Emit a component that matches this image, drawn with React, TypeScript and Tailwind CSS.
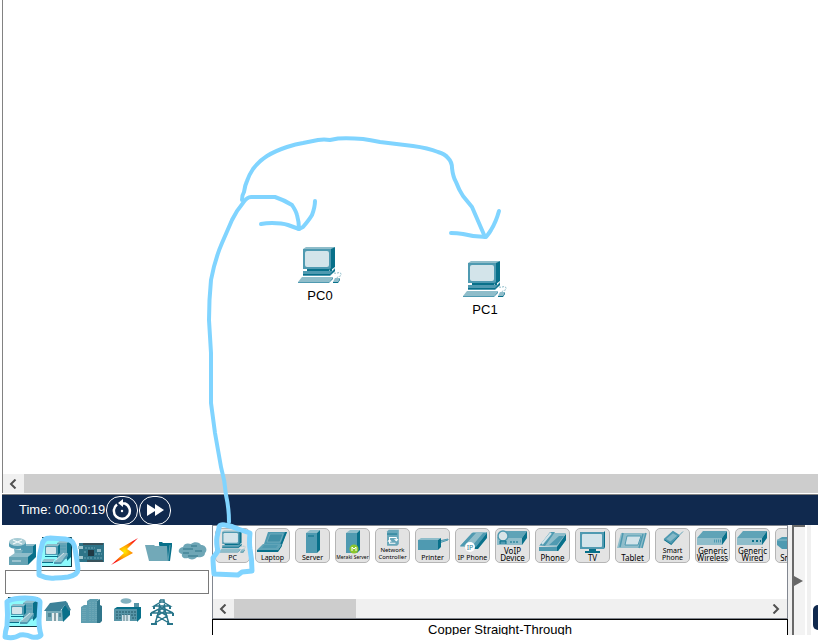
import type { ReactNode } from "react";

const MID = "#4f9ab1";
const DARK = "#08708a";
const LIGHT = "#8fbdca";
const SCREEN = "#d3e4ea";

function PcArt({ className }: { className: string }) {
  return (
    <svg viewBox="0 0 44 38" className={className} aria-hidden="true">
      <path d="M5 3l3-2h29l-3 2z" fill={LIGHT} />
      <path d="M33 3l4-2v20l-4 3z" fill={DARK} />
      <rect x="5" y="3" width="28" height="20" fill={MID} />
      <rect x="7" y="5" width="24" height="16" rx="2" fill={SCREEN} />
      <path d="M9 23h22v2H9z" fill={DARK} />
      <path d="M31 23l3-1v3l-2 1z" fill={DARK} />
      <path d="M5 25h29l3-3v3l-5 5H5z" fill={MID} />
      <path d="M5 28h27l5-5v2l-5 4H5z" fill={DARK} />
      <path d="M4 31h31l-4 5H0z" fill={LIGHT} />
      <path d="M0 36h31l4-5v2l-4 4H0z" fill={MID} />
      <path d="M35 36l2-4h5l-2 4z" fill={LIGHT} />
      <path d="M35 36h5l2-4v2l-2 3h-5z" fill={DARK} />
      <path d="M36 27c3 1 6-2 7 1s-4 2-4 4" fill="none" stroke={LIGHT} strokeDasharray="2 1" />
    </svg>
  );
}

function Icon({ children, box = "0 0 30 30", className = "h-[30px] w-[30px]" }: { children: ReactNode; box?: string; className?: string }) {
  return (
    <svg viewBox={box} className={className} aria-hidden="true">
      {children}
    </svg>
  );
}

function EndDevices() {
  return (
    <Icon>
      <path d="M0 0h30v30H0z" fill="#8cfafc" />
      <path d="M0 .5h29.500V30M0 29.500h30" fill="none" stroke="#123c46" />
      <path d="M15 6l4-3h10l-4 3z" fill={LIGHT} />
      <path d="M15 6h10v16H15z" fill="#65a5b8" />
      <path d="M25 6l4-3v17l-4 4z" fill={DARK} />
      <path d="M18 9h6M18 12h6" stroke={MID} />
      <path d="M3 9l2-2h13l-2 2z" fill={LIGHT} />
      <path d="M3 9h13v9H3z" fill={MID} />
      <path d="M16 9l2-2v9l-2 2z" fill={DARK} />
      <rect x="4" y="10" width="10" height="7" rx="1" fill={SCREEN} />
      <path d="M3 19h13v1H3z" fill={DARK} />
      <path d="M2 22h11l-2 3H0z" fill={LIGHT} />
      <path d="M0 25h11v1H0z" fill={DARK} />
      <path d="M12 25l9-9h5l-7 9z" fill={LIGHT} />
      <path d="M12 25h7l7-9v3l-7 8h-7z" fill={MID} />
      <path d="M14 23l8-7" stroke={SCREEN} />
    </Icon>
  );
}

const categories: { name: string; art: ReactNode }[] = [
  {
    name: "Network Devices",
    art: (
      <Icon>
        <path d="M13 9l4-2h11l-3 2z" fill={LIGHT} />
        <path d="M13 9h12v13H13z" fill={MID} />
        <path d="M25 9l3-2v13l-3 3z" fill={DARK} />
        <path d="M1 5v4c1 4 16 4 17 0V5z" fill={MID} />
        <ellipse cx="9.500" cy="5" rx="8.500" ry="4" fill="#a7ccd5" />
        <path d="M5 3l9 4M14 3L5 7" stroke="#f4fafb" strokeWidth="1.200" />
        <path d="M6 12l9 1-3 6H7z" fill="#78b0bf" />
        <path d="M1 20l6-4h18l-5 4z" fill={LIGHT} />
        <path d="M1 20h19v8H1z" fill="#65a3b4" />
        <path d="M20 20l5-4v7l-5 5z" fill={DARK} />
        <path d="M4 24h9" stroke={SCREEN} />
      </Icon>
    ),
  },
  { name: "End Devices", art: <EndDevices /> },
  {
    name: "Components",
    art: (
      <Icon>
        <path d="M3 6h25v19H3z" fill="#2e7488" />
        <path d="M7 6h20v2H7zM11 23h16v2H11z" fill="#38515a" />
        <path d="M12 13h6v6h-6z" fill="#203943" />
        <path d="M2 9h5v3H2zM2 19h5v3H2z" fill="#a5c8cf" />
        <path d="M9 11h10M19 17h7M18 21h8M8 21h8M8 15h3" stroke="#6fa6b5" strokeDasharray="2 1" />
        <path d="M21 12h4v3h-4z" fill="#89b5c1" />
      </Icon>
    ),
  },
  {
    name: "Connections",
    art: (
      <Icon>
        <defs>
          <radialGradient id="bolt"><stop stopColor="#ffed00" /><stop offset=".5" stopColor="#ff9800" /><stop offset="1" stopColor="#fb1212" /></radialGradient>
        </defs>
        <path d="M28 1L9 12l5 4L1 28l22-12-6-4z" fill="url(#bolt)" />
      </Icon>
    ),
  },
  {
    name: "Miscellaneous",
    art: (
      <Icon>
        <path d="M15 8V5h3l1 1h9v3l-2 15h-4z" fill={DARK} />
        <path d="M1 8h9l1 1h12l1 15H5z" fill="#72a9b8" />
        <path d="M24 24l2-16" fill="none" stroke="#5fa0b3" />
      </Icon>
    ),
  },
  {
    name: "Multiuser Connection",
    art: (
      <Icon>
        <path d="M5 10C6 6 10 6 13 7c3-3 9-2 10 1 5 0 7 5 4 8 0 4-5 5-8 4-2 3-7 3-9 1-4 1-7-1-6-4-5-1-4-6 1-7z" fill="#6ea6b6" />
        <path d="M5 12h10M13 9h6M5 16h6M10 19h10M17 14h7" stroke="#448598" strokeWidth="1.300" />
      </Icon>
    ),
  },
];

const subcategories: { name: string; art: ReactNode }[] = [
  { name: "End Devices", art: <EndDevices /> },
  {
    name: "Home",
    art: (
      <Icon>
        <path d="M3 13h17v11H3z" fill="#76abb9" />
        <path d="M19 12l5-7 3 8v5l-7 7z" fill={DARK} />
        <path d="M1 14L7 6l16-2 5 9-2 1-4-6-5 6z" fill="#3d8299" />
        <path d="M9 16h6v8H9z" fill="#e4eef0" />
        <path d="M12 16v8" stroke="#264e5a" />
        <path d="M5 16h3v4H5M16 16h2v4h-2" fill="#4f8797" />
      </Icon>
    ),
  },
  {
    name: "Smart City",
    art: (
      <Icon>
        <path d="M3 10l3-2h6v18H3zM9 4l3-2h9l-2 2v22H9z" fill="#5e9eb0" />
        <path d="M19 4l3-2v6l2 1v15l-2 2h-3z" fill="#30768b" />
        <path d="M5 11v14M7 11v14M12 5v20M15 5v20M18 5v20" stroke="#78aebb" strokeDasharray="1 1" />
      </Icon>
    ),
  },
  {
    name: "Industrial",
    art: (
      <Icon>
        <ellipse cx="13" cy="4" rx="5.500" ry="2.800" fill="#83b1bf" />
        <path d="M21 6h5v8h-5zM1 12h23v12H1z" fill="#5795a7" />
        <path d="M1 12l3-2h24l-4 2zM24 12l4-2v11l-4 4z" fill={DARK} />
        <path d="M3 15h20M3 18h20M3 21h5M19 21h4" stroke="#225766" strokeDasharray="2 1" />
        <path d="M9 18h8v6H9z" fill={SCREEN} />
        <path d="M11 18v6M14 18v6" stroke="#557d86" />
      </Icon>
    ),
  },
  {
    name: "Power Grid",
    art: (
      <Icon>
        <path d="M12 3h4l1 10 4 14M12 3l-1 10-4 14M6 9l7-4h2l7 4zM3 16l8-4h6l8 4zM11 9l6 5-8 5 12 7M17 9l-6 5 8 5L7 26" fill="none" stroke="#28758a" strokeWidth="1.400" />
        <path d="M6 9v3M22 9v3M3 16v3M25 16v3M3 27h6M19 27h6" stroke="#28758a" strokeWidth="2" />
      </Icon>
    ),
  },
];

const slab = (
  <>
    <path d="M1 9l6-7h24l-5 7z" fill="#5fa3b7" />
    <path d="M1 9h25v7H1z" fill={LIGHT} />
    <path d="M26 9l5-7v7l-5 7z" fill={DARK} />
  </>
);

const devices: { lines: string[]; size: string; art: ReactNode }[] = [
  { lines: ["PC"], size: "text-[7px]", art: null },
  {
    lines: ["Laptop"], size: "text-[7px]",
    art: (<><path d="M12 3h19l-5 12H8z" fill={MID} /><path d="M29 3h2l-5 13h-2z" fill={DARK} /><path d="M14 5h13l-3 8H11z" fill="#418fa6" stroke={LIGHT} strokeWidth=".5" /><path d="M7 15h19l-4 6H1z" fill="#60a4b8" /><path d="M8 16h14l-2 3H6z" fill={MID} /><path d="M1 21h21l4-6v2l-4 6H1z" fill={DARK} /></>),
  },
  {
    lines: ["Server"], size: "text-[7px]",
    art: (<><path d="M10 4l4-3h10l-3 3z" fill={LIGHT} /><path d="M10 4h11v20H10z" fill={MID} /><path d="M21 4l3-3v20l-3 3z" fill={DARK} /><path d="M12 7h6" stroke={DARK} /></>),
  },
  {
    lines: ["Meraki Server"], size: "text-[5px]",
    art: (<><path d="M10 4l4-3h10l-3 3z" fill={LIGHT} /><path d="M10 4h11v20H10z" fill={MID} /><path d="M21 4l3-3v20l-3 3z" fill={DARK} /><circle cx="18" cy="20" r="4.500" fill="#8bc62d" /><path d="M16 22v-4l2 2 2-2v4" fill="none" stroke="#fff" /></>),
  },
  {
    lines: ["Network", "Controller"], size: "text-[6px]",
    art: (<><path d="M10 3l2-2h12v17l-2 2H10z" fill="#68a7ba" /><path d="M10 6h12" stroke={DARK} /><path d="M13 13v-3h8v3m-2-1l2 2 2-2M20 17h-7v-4m-2 2l2-2 2 2" fill="none" stroke="#fff" strokeWidth="1.200" /></>),
  },
  {
    lines: ["Printer"], size: "text-[7px]",
    art: (<><path d="M23 14l9-3v-1l-9 2z" fill={LIGHT} stroke={MID} /><path d="M2 11l3-2h20l-3 2z" fill={LIGHT} /><path d="M2 11h20v10H2z" fill={MID} /><path d="M22 11l3-2v9l-3 3z" fill={DARK} /></>),
  },
  {
    lines: ["IP Phone"], size: "text-[7px]",
    art: (<><path d="M5 16L17 3h14L20 18H4z" fill={LIGHT} /><path d="M18 17h2L31 3v6l-9 11h-4z" fill={DARK} /><path d="M4 17L16 4h4L8 17zM16 17L27 4h4L20 18z" fill={MID} /><circle cx="14" cy="18" r="5" fill="#fff" /><text x="14" y="21" textAnchor="middle" fontSize="7" fontFamily="Noto Sans, sans-serif" fill="#337f98">IP</text></>),
  },
  {
    lines: ["VoIP", "Device"], size: "text-[8px]",
    art: (<>{slab}<circle cx="7" cy="7" r="5" fill="#d9e5e8" stroke={MID} strokeWidth="1.500" /><path d="M4 15v-3h6v3" stroke={DARK} fill={MID} /><path d="M14 13h9" stroke={DARK} strokeDasharray="2 1" /></>),
  },
  {
    lines: ["Phone"], size: "text-[8px]",
    art: (<><path d="M3 17L14 4h16l-8 14z" fill={LIGHT} /><path d="M3 18h18l9-13v6l-8 11H3z" fill={MID} /><path d="M21 18l9-13v6l-8 11h-1z" fill={DARK} /><path d="M13 16L23 7h5l-7 9z" fill={MID} /><path d="M4 16L14 3h5L9 17z" fill={MID} /><path d="M6 15l9-11" stroke={SCREEN} strokeWidth="2" /></>),
  },
  {
    lines: ["TV"], size: "text-[8px]",
    art: (<><path d="M4 3h24v17H4z" fill={MID} /><path d="M28 3l1-1v16l-1 2z" fill={DARK} /><rect x="6" y="5" width="20" height="13" rx="1" fill={SCREEN} /><path d="M13 20h7v2h4v2H9v-2h4z" fill={DARK} /></>),
  },
  {
    lines: ["Tablet"], size: "text-[8px]",
    art: (<><path d="M5 4h25l-4 15H1z" fill={LIGHT} /><path d="M11 7h14l-3 9H9z" fill={SCREEN} stroke={MID} /><path d="M7 4L4 18M27 5l-4 14M30 4l-4 15" stroke={MID} strokeWidth="1.500" /></>),
  },
  {
    lines: ["Smart", "Phone"], size: "text-[7px]",
    art: (<><path d="M6 13L17 3l8 5-10 11z" fill={DARK} /><path d="M6 12L17 2l8 5-10 11z" fill={MID} /><path d="M9 12l8-7 5 3-8 7z" fill="#86b9c8" /><path d="M24 8l5-5" stroke={MID} /></>),
  },
  { lines: ["Generic", "Wireless"], size: "text-[8px]", art: (<>{slab}<path d="M18 12h7" stroke={MID} strokeWidth="3" strokeDasharray="1 1" /></>) },
  { lines: ["Generic", "Wired"], size: "text-[8px]", art: (<>{slab}<path d="M16 12h9" stroke={DARK} strokeWidth="2" strokeDasharray="2 2" /></>) },
  { lines: ["Sniffer"], size: "text-[8px]", art: (<><path d="M1 11l5-3h24v8l-5 4H6l-5-4z" fill={MID} /><path d="M1 11h23l6-3" fill="none" stroke={LIGHT} /></>) },
];

function CanvasNode({ label, place }: { label: string; place: string }) {
  return (
    <div className={"absolute flex w-[44px] flex-col items-center " + place}>
      <PcArt className="h-[38px] w-[44px]" />
      <span className="mt-1 text-[13px] leading-[15px]">{label}</span>
    </div>
  );
}

function Chevron({ left }: { left?: boolean }) {
  return (
    <svg viewBox="0 0 8 10" className="mr-[2px] h-[10px] w-[8px]" aria-hidden="true">
      <path d={left ? "M6.500 .5L2 5l4.500 4.500" : "M1.500 .5L6 5 1.500 9.500"} fill="none" stroke="#505050" strokeWidth="2" />
    </svg>
  );
}

function Annotations() {
  return (
    <svg viewBox="0 0 818 642" className="pointer-events-none absolute top-0 left-0 h-[642px] w-[818px]" fill="none" stroke="#80d4ff" strokeLinecap="round" strokeLinejoin="round" aria-hidden="true">
      <g strokeWidth="4">
        <path d="M242 200Q242 195 244 192Q245 185 247 181Q249 175 253 169Q259 161 267 156Q275 151 287 147Q296 144 303 143L318 140Q324 139 330 140L338 138.500Q350 138 363 139Q370 140 380 142L413 146Q428 148 438 152Q445 154 448 158Q452 162 452 168Q453 177 456 182Q459 190 463 196L472 207L485 237" />
        <path d="M451 233Q457 233 463 234Q474 237 486 237Q490 232 491 230Q496 222 499 211" />
        <path d="M229 522Q229 508 226 495Q225 481 221 467L215 433L211 403V353L209 320Q209 300 211 280Q215 259 222 243L232 220Q237 210 243 203Q247 197 251 197H275Q284 200 292 205Q296 211 297 215Q299 222 299 229" />
        <path d="M261 224Q266 223 272 223Q282 223 288 225L299 229L303 227Q309 220 312 215Q315 207 315 201" />
      </g>
      <g strokeWidth="5">
        <path d="M219 528Q219 524 225 525Q232 526 238 529L250 533Q249 543 250 549Q252 559 252 571L242 572L238 575L214 574Q213 563 213 558L218 551Q216 543 217 537L219 528" />
        <path d="M50 538Q43 538 42 545Q39 554 39 562V575Q47 579 55 578Q61 578 68 577Q78 575 78 569Q77 560 76 555Q75 548 74 545Q73 540 65 539L50 538" />
        <path d="M8 601Q14 598 25 598Q40 598 40 602L39 620Q39 629 41 635Q39 638 32 637Q26 634 20 635Q14 639 5 637Q5 632 7 626Q8 615 7 602" />
      </g>
    </svg>
  );
}

export default function App() {
  return (
    <div className="relative flex h-screen min-h-[642px] flex-col overflow-hidden bg-white pb-[7px] pl-[2px] font-['Liberation_Sans',Arial,sans-serif] text-[13px] text-black">
      <main className="relative flex-1 border-l border-[#828282]">
        <CanvasNode label="PC0" place="left-[295px] top-[246px]" />
        <CanvasNode label="PC1" place="left-[460px] top-[260px]" />
      </main>
      <div className="flex h-[19px] shrink-0 border-l border-[#828282] bg-[#cdcdcd]">
        <button aria-label="Scroll left" className="flex w-[21px] items-center justify-center bg-[#f0f0f0]">
          <Chevron left />
        </button>
      </div>
      <div className="h-[2px] shrink-0 border-b border-[#828282] bg-white" />

      <header className="flex h-[30px] shrink-0 items-center bg-[#10294e] pl-[17px] text-white">
        <span className="w-[87px] whitespace-nowrap">Time: 00:00:19</span>
        <button aria-label="Power cycle devices" className="flex h-[29px] w-[32px] items-center justify-center rounded-[14px] border border-white">
          <svg viewBox="0 0 22 22" className="h-[22px] w-[22px]" fill="none" stroke="white" strokeWidth="2.500" aria-hidden="true">
            <path d="M6 5.500A8 8 0 1 0 14 4.500H10" />
            <path d="M12 0v8L7 4z" fill="white" stroke="none" />
            <circle cx="11" cy="12" r="1.200" fill="white" stroke="none" />
          </svg>
        </button>
        <button aria-label="Fast forward time" className="ml-px flex h-[29px] w-[32px] items-center justify-center rounded-[14px] border border-white">
          <svg viewBox="0 0 18 12" className="h-[12px] w-[18px]" fill="white" aria-hidden="true">
            <path d="M1 0l8 5V0l9 6-9 6V7l-8 5z" />
          </svg>
        </button>
      </header>

      <div className="flex h-[110px] shrink-0">
        <aside className="w-[210px] shrink-0 pt-[12px]">
          <div className="flex gap-1 pl-[6px]">
            {categories.map((c) => (
              <button key={c.name} aria-label={c.name} className="h-[30px] w-[30px] shrink-0">{c.art}</button>
            ))}
          </div>
          <input aria-label="Search devices" className="mt-[3px] ml-[3px] block h-[24px] w-[204px] border border-[#7a7a7a] bg-white px-1 outline-none" />
          <div className="mt-[3px] flex gap-[5px] pl-[6px]">
            {subcategories.map((c) => (
              <button key={c.name} aria-label={c.name} className="h-[30px] w-[30px] shrink-0">{c.art}</button>
            ))}
          </div>
        </aside>

        <section className="flex min-w-0 flex-1 flex-col">
          <div className="flex h-[94px] shrink-0 flex-col justify-between border border-[#828790]">
            <div className="flex gap-[5px] overflow-hidden pt-[2px] pl-[2px]">
              {devices.map((d) => (
                <button key={d.lines.join(" ")} className="flex h-[35px] w-[35px] shrink-0 flex-col items-center justify-between overflow-hidden rounded-[5px] border border-[#b5b5b5] bg-[#e3e3e3]">
                  {d.art ? (
                    <Icon box="0 0 33 25" className={d.lines.length > 1 && d.size !== "text-[8px]" ? "h-[21px] w-[33px] shrink-0" : "h-[25px] w-[33px] shrink-0"}>{d.art}</Icon>
                  ) : (
                    <PcArt className="mt-px h-[23px] w-[27px] shrink-0" />
                  )}
                  <span className={"-mt-[10px] flex flex-col items-center font-['Noto_Sans',sans-serif] leading-[7px] whitespace-nowrap pb-px " + d.size}>
                    {d.lines.map((line) => (
                      <span key={line}>{line}</span>
                    ))}
                  </span>
                </button>
              ))}
            </div>
            <div className="flex h-[19px] bg-[#f0f0f0]">
              <button aria-label="Scroll devices left" className="flex w-[21px] items-center justify-center">
                <Chevron left />
              </button>
              <div className="w-[122px] bg-[#cdcdcd]" />
              <button aria-label="Scroll devices right" className="ml-auto flex w-[21px] items-center justify-center">
                <Chevron />
              </button>
            </div>
          </div>
          <div className="flex-1 overflow-hidden border-x border-t border-black text-center leading-[20px]">Copper Straight-Through</div>
        </section>

        <div className="w-[4px] shrink-0 bg-[#f0f0f0]" />
        <button aria-label="Collapse panel" className="flex w-[13px] shrink-0 items-center border-t-2 border-l-2 border-[#696969] bg-[#f3f3f3]">
          <svg viewBox="0 0 9 10" className="h-[10px] w-[9px]" aria-hidden="true">
            <path d="M0 0l9 5-9 5z" fill="#666" />
          </svg>
        </button>
        <div className="w-[2px] shrink-0" />
        <div className="w-[4px] shrink-0 bg-[#f0f0f0]" />
        <div className="flex w-[7px] shrink-0 justify-end overflow-hidden pt-[80px]">
          <button aria-label="Toggle simulation list" className="h-[25px] w-[5px] rounded-l-[5px] bg-[#10294e]" />
        </div>
      </div>
      <Annotations />
    </div>
  );
}
